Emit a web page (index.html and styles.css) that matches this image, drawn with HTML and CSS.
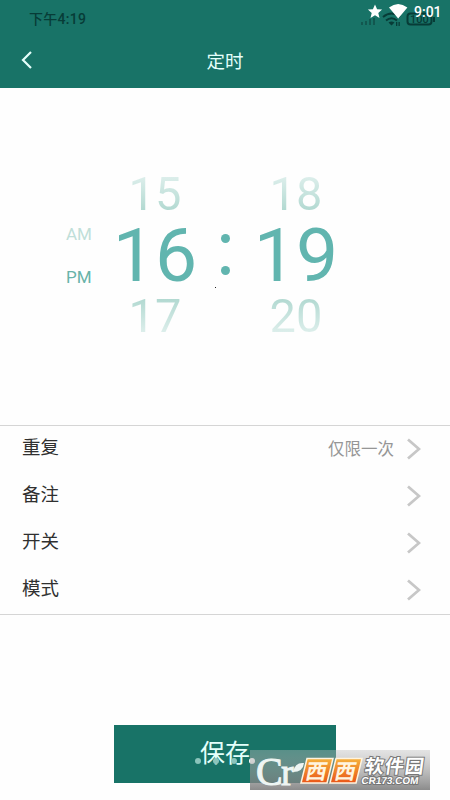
FILE: index.html
```html
<!DOCTYPE html>
<html lang="zh-CN">
<head>
<meta charset="utf-8">
<title>定时</title>
<link rel="stylesheet" href="styles.css">
</head>
<body>
<div class="screen">
  <header class="header">
    <div class="status">
      <span class="clock-old">下午4:19</span>
      <svg class="status-icons" width="90" height="32" viewBox="0 0 90 32">
        <g fill="#12574f"><rect x="1" y="22" width="2" height="3"/><rect x="5" y="21" width="2" height="4"/><rect x="9" y="19" width="2" height="6"/><rect x="13" y="18" width="2" height="7"/></g>
        <g fill="none" stroke="#073c37" stroke-width="2"><path d="M23 17q8.500-7 17 0M26 20.500q5.500-4.500 11 0"/><rect x="47.500" y="13.500" width="24" height="11" rx="3"/></g>
        <path d="M28.500 22.500q3-2.200 6 0l-3 3zM73 17h2v5h-2zM36 22h1.300v4H36zM38.500 22h1.300v4h-1.300z" fill="#073c37"/>
        <text x="50" y="23" class="battery">100</text>
        <path d="M15 4.500l2.100 4.700 5 .4-3.800 3.400 1.200 5-4.500-2.700-4.500 2.700 1.200-5L7.900 9.600l5-.4zM29 7.500q9.200-7 18.400 0L38.200 18.500z" fill="#fff"/>
      </svg>
      <span class="clock">9:01</span>
    </div>
    <div class="titlebar">
      <svg class="back" width="12" height="20" viewBox="0 0 12 20"><path d="M11 2L3 10 11 18" fill="none" stroke="#e4fffb" stroke-width="2.200"/></svg>
      <h1>定时</h1>
    </div>
  </header>
  <main>
    <section class="picker">
      <div class="period"><span class="am">AM</span><span class="pm">PM</span></div>
      <div class="wheel"><span class="prev">15</span><strong>16</strong><span class="next">17</span></div>
      <div class="colon"><i></i><i></i></div>
      <div class="wheel"><span class="prev">18</span><strong>19</strong><span class="next">20</span></div>
      <b class="speck"></b>
    </section>
    <section class="options">
      <div class="row"><span>重复</span><em>仅限一次</em><svg width="14" height="22" viewBox="0 0 14 22"><path d="M1 1.500l11 9.500L1 20.500"/></svg></div>
      <div class="row"><span>备注</span><svg width="14" height="22" viewBox="0 0 14 22"><path d="M1 1.500l11 9.500L1 20.500"/></svg></div>
      <div class="row"><span>开关</span><svg width="14" height="22" viewBox="0 0 14 22"><path d="M1 1.500l11 9.500L1 20.500"/></svg></div>
      <div class="row"><span>模式</span><svg width="14" height="22" viewBox="0 0 14 22"><path d="M1 1.500l11 9.500L1 20.500"/></svg></div>
    </section>
    <button class="save">保存</button>
  </main>
  <div class="dots"><i></i><i></i><i></i><i></i></div>
  <svg class="brand" width="180" height="40" viewBox="0 0 180 40">
    <defs>
      <linearGradient id="shade" x2="0" y2="1"><stop offset="0" stop-color="#bbb" stop-opacity=".4"/><stop offset="1" stop-color="#777" stop-opacity=".85"/></linearGradient>
      <linearGradient id="tile" x2="0" y2="1"><stop offset="0" stop-color="#f6b13b"/><stop offset="1" stop-color="#e95518"/></linearGradient>
    </defs>
    <rect width="180" height="40" fill="url(#shade)"/>
    <text x="6" y="35" class="cr-big">C</text>
    <text x="31" y="35" class="cr-small">r</text>
    <path d="M43 22q2-10 11-9-1 9-11 9z" fill="#eef5f3"/>
    <path d="M57 8.500h26l-6 24.500H51zM86 8.500h26l-6 24.500H80z" fill="url(#tile)" stroke="#fff4df" stroke-width="1.500"/>
    <text class="tile-text" transform="translate(54.500 28.500) skewX(-12)">西</text>
    <text class="tile-text" transform="translate(83.500 28.500) skewX(-12)">西</text>
    <text class="brand-name" transform="translate(114 23) skewX(-8)" textLength="59">软件园</text>
    <text class="brand-url" transform="translate(111 34) skewX(-8)" textLength="57" lengthAdjust="spacingAndGlyphs">CR173.COM</text>
  </svg>
</div>
</body>
</html>
```

FILE: styles.css
```css
* { box-sizing: border-box; }
body { margin: 0; background: #fefefe; font-family: Roboto, "Noto Sans CJK SC", sans-serif; }
.screen { position: relative; width: 450px; height: 800px; overflow: hidden; }
.header { height: 88px; background: #187367; }
.status { position: relative; height: 36px; padding: 9px 0 0 29px; }
.clock-old { font-size: 14px; line-height: 18px; font-weight: 500; letter-spacing: .3px; color: #073c37; }
.status-icons { position: absolute; left: 360px; top: 0; }
.battery { font-size: 11px; font-weight: 500; fill: #073c37; }
.clock { position: absolute; left: 414px; top: 4px; font-size: 14px; line-height: 16px; font-weight: 500; color: #fff; }
.titlebar { display: flex; align-items: center; justify-content: center; height: 52px; position: relative; }
.back { position: absolute; left: 20px; top: 14px; }
h1 { margin: 0; font-size: 18.500px; font-weight: 400; line-height: 28px; color: #e4fffb; }
.picker { position: relative; height: 337px; padding: 75px 0 0 66px; display: flex; }
.period { width: 39px; padding-top: 61px; display: flex; flex-direction: column; font-size: 17px; line-height: 20px; gap: 23px; }
.am { color: #c0dfd9; }
.pm { color: #68b3a9; }
.wheel { width: 100px; display: flex; flex-direction: column; align-items: center; line-height: 61px; }
.wheel span { font-size: 47px; height: 61px; color: transparent; -webkit-background-clip: text; background-clip: text; }
.wheel .prev { line-height: 62px; background-image: linear-gradient(#deefec 20%, #b0d8d0 80%); }
.wheel .next { line-height: 61px; background-image: linear-gradient(#b0d8d0 20%, #deefec 80%); }
.wheel strong { font-size: 75px; font-weight: 400; height: 61px; line-height: 63px; color: #61b5af; }
.colon { width: 41px; padding-top: 71px; display: flex; flex-direction: column; align-items: center; gap: 23px; }
.colon i { width: 9px; height: 9px; border-radius: 50%; background: #61b5af; }
.speck { position: absolute; left: 215px; top: 199px; width: 1px; height: 1px; background: #222; }
.options { height: 190px; border-top: 1px solid #d5d5d5; border-bottom: 1px solid #d5d5d5; }
.row { display: flex; align-items: center; height: 47px; padding: 0 29px 1px 22px; color: #303030; font-size: 18.500px; line-height: 26px; }
.row span { margin-right: auto; padding-bottom: 3px; }
.row em { margin-right: 13px; padding-top: 2px; font-size: 16.500px; font-style: normal; color: #969696; }
.row svg { fill: none; stroke: #c7c7c7; stroke-width: 2.800; }
.save { display: block; margin: 110px auto 0 114px; width: 222px; height: 58px; padding: 0; border: 0; background: #187367; color: #e4fffb; font: 25px/58px Roboto, "Noto Sans CJK SC", sans-serif; }
.dots { position: absolute; left: 195px; top: 758px; display: flex; gap: 12px; }
.dots i { width: 6px; height: 6px; border-radius: 50%; background: #8bc4bb; }
.dots i:last-child { background: #fff; }
.brand { position: absolute; left: 250px; top: 750px; }
.cr-big { font: 40px "Liberation Serif", serif; fill: #eef5f3; stroke: #eef5f3; }
.cr-small { font: 38px "Liberation Serif", serif; fill: #eef5f3; stroke: #eef5f3; }
.tile-text { font: 700 21px "Noto Sans CJK SC", sans-serif; fill: #fff4df; }
.brand-name { font: 700 19px "Noto Sans CJK SC", sans-serif; fill: #fff; stroke: #777; stroke-width: 2px; paint-order: stroke; }
.brand-url { font: 700 10px "Liberation Sans", sans-serif; fill: #fff; stroke: #777; stroke-width: 2px; paint-order: stroke; }
```
